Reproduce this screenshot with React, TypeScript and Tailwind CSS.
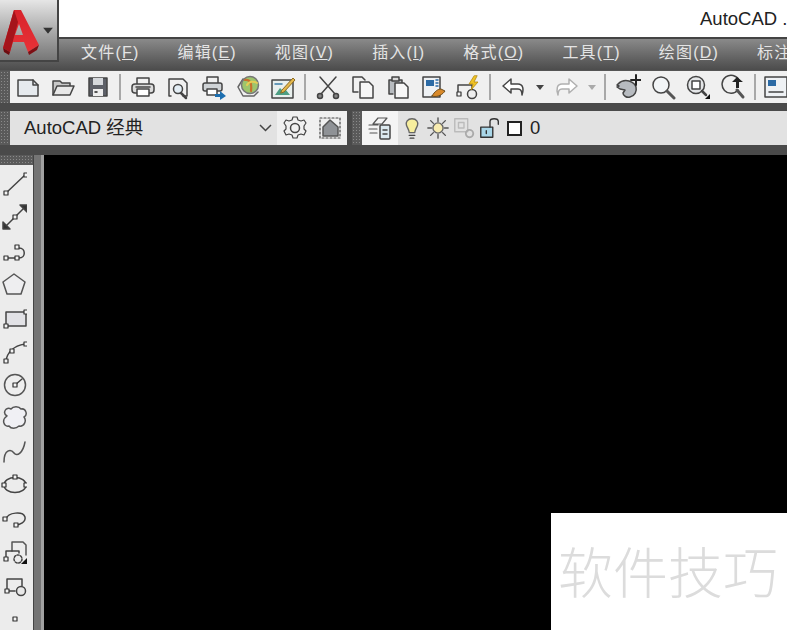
import type { ReactNode } from 'react';

const cjk = { fontFamily: '"Liberation Sans", "Noto Sans CJK SC", sans-serif' };

const menus = [
  ['文件', 'F'],
  ['编辑', 'E'],
  ['视图', 'V'],
  ['插入', 'I'],
  ['格式', 'O'],
  ['工具', 'T'],
  ['绘图', 'D'],
];

function Ico({ children, size = 26 }: { children: ReactNode; size?: number }) {
  return (
    <svg width={size} height={size} viewBox="0 0 26 26" fill="none" stroke="#444" strokeWidth="1.5" strokeLinejoin="round" strokeLinecap="round">
      {children}
    </svg>
  );
}

function Slot({ w = 35, children }: { w?: number; children: ReactNode }) {
  return (
    <div className="flex shrink-0 items-center justify-center" style={{ width: w }}>
      {children}
    </div>
  );
}

function Sep() {
  return (
    <div className="flex w-[10px] shrink-0 justify-center">
      <div className="h-[26px] w-[2px] bg-[#a8a8a8]" />
    </div>
  );
}

function Grip() {
  return <div className="w-[10px] shrink-0 bg-[#5a5a5a] bg-[radial-gradient(#8a8a8a_1px,transparent_1px)] bg-[length:3px_3px]" />;
}

function Caret({ color = '#444' }: { color?: string }) {
  return (
    <svg width="8" height="5" viewBox="0 0 8 5">
      <path d="M0 0h8L4 5z" fill={color} />
    </svg>
  );
}

function Node({ x, y }: { x: number; y: number }) {
  return <rect x={x - 2} y={y - 2} width="4" height="4" fill="#f4f4f4" stroke="#333" strokeWidth="1.2" />;
}

const leftIcons: ReactNode[] = [
  <>
    <path d="M5 22 24 4" />
    <Node x={5} y={22} />
    <Node x={25} y={4} />
  </>,
  <>
    <path d="M5 22 23 4" />
    <path d="M2 18v7h7zM26 8V1h-7z" fill="#333" />
    <Node x={14} y={13} />
  </>,
  <>
    <path d="M6 20h12c7 0 7-10 0-10h-3" />
    <Node x={5} y={20} />
    <Node x={16} y={20} />
    <Node x={16} y={9} />
  </>,
  <path d="M13 3 24 11l-4 12H6L2 11z" fill="#eeeef0" stroke="#555" />,
  <>
    <rect x="5" y="7" width="20" height="14" fill="#e2e2e6" stroke="#444" />
    <Node x={5} y={21} />
    <Node x={25} y={7} />
  </>,
  <>
    <path d="M5 23C6 15 12 8 24 6" />
    <Node x={5} y={23} />
    <Node x={11} y={13} />
    <Node x={25} y={6} />
  </>,
  <>
    <circle cx="14" cy="13" r="10.5" fill="#eee" stroke="#555" />
    <path d="M14 13 21 7" />
    <Node x={14} y={13} />
  </>,
  <path d="M6 11C1 8 5 1 10 4c2-3 8-3 10 0 5-1 7 6 3 8 3 4 0 10-5 9-3 3-8 3-10 0-5 1-8-6-2-10z" fill="#f0f0f4" stroke="#555" />,
  <path d="M3 23C3 10 10 10 13 14s9 0 11-11" stroke="#555" />,
  <>
    <ellipse cx="14" cy="13" rx="11" ry="7.5" />
    <Node x={14} y={5} />
    <Node x={3} y={13} />
    <Node x={25} y={13} />
  </>,
  <>
    <path d="M5 13C7 6 22 5 24 11c1 5-5 8-10 8" />
    <Node x={4} y={13} />
    <Node x={15} y={19} />
  </>,
  <>
    <path d="M11 12V3h11l3 3v10" stroke="#555" />
    <path d="M5 19v-7h13v2" />
    <circle cx="17" cy="20" r="4" strokeDasharray="2 1.5" />
    <Node x={5} y={20} />
    <path d="M26 19v6h-6z" fill="#111" stroke="none" />
  </>,
  <>
    <path d="M6 18V6h15v7" />
    <path d="M7 18h7" />
    <circle cx="20" cy="18" r="4.5" fill="#e8e8e8" />
    <Node x={6} y={18} />
  </>,
  <Node x={14} y={13} />,
];

const tb1a: ReactNode[] = [
  <>
    <path d="M3 6h15l5 5v11H3z" fill="#e6eaee" />
    <path d="M18 6v5h5" />
  </>,
  <>
    <path d="M3 21V7h7l2 2h8v3" fill="#c8c8c8" />
    <path d="M3 21 7 12h17l-4 9z" fill="#e8e8e8" />
  </>,
  <>
    <path d="M4 4h18v18H4z" fill="#5d6068" />
    <path d="M8 4h10v7H8z" fill="#d5d8dc" stroke="none" />
    <path d="M8 15h10v7H8z" fill="#eee" stroke="none" />
    <path d="M10 18h2" stroke="#222" />
  </>,
];

const tb1b: ReactNode[] = [
  <>
    <path d="M7 10V4h12v6" />
    <rect x="2" y="10" width="22" height="9" rx="3" fill="#dcdcdc" />
    <path d="M7 15h12v7H7z" fill="#fff" />
    <path d="M6 13h14" />
  </>,
  <>
    <path d="M6 22H4V5h14l4 4v13h-4" />
    <circle cx="13" cy="15" r="4.5" fill="#e4eef5" />
    <path d="m16 19 5 5" strokeWidth="2.5" />
  </>,
  <>
    <path d="M7 9V3h11v6" />
    <rect x="3" y="9" width="19" height="8" rx="2" fill="#cfd3d6" />
    <path d="M7 15h10v6H7z" fill="#fff" />
    <path d="M15 20h5v-3l6 5-6 4v-3h-5z" fill="#1d6fb0" stroke="none" />
  </>,
  <>
    <path d="M8 5 3 13l5 9h11l4-4" stroke="#666" />
    <circle cx="15" cy="11" r="8.5" fill="#9ec56c" stroke="#777" />
    <path d="M10 6c5-1 7 3 6 11" stroke="#c9702c" strokeWidth="2.2" />
    <path d="M22 9c-3-2-8-2-10 2" stroke="#e5cd55" strokeWidth="2" />
  </>,
  <>
    <rect x="2" y="6" width="21" height="18" fill="#e9f0ee" />
    <path d="M5 21 10 14l4 4 2-2 4 5z" fill="#4d9e83" stroke="none" />
    <path d="M5 10h7" stroke="#3c7da8" />
    <path d="m12 16 11-12 2 2-11 12-3 1z" fill="#e4b84c" stroke="#8c6b22" strokeWidth="1" />
  </>,
];

const tb1c: ReactNode[] = [
  <>
    <path d="m5 3 15 17M21 3 6 20" />
    <circle cx="5" cy="22" r="2.5" fill="#888" />
    <circle cx="21" cy="22" r="2.5" fill="#888" />
  </>,
  <>
    <path d="M8 18H3V3h9l3 3" />
    <path d="M10 8h9l4 4v12H10z" fill="#f7f7f7" />
  </>,
  <>
    <path d="M8 20H4V6h13v3" fill="#b8bcc0" />
    <path d="M7 3h7v4H7z" fill="#d9d9d9" />
    <path d="M10 9h9l4 4v11H10z" fill="#f7f7f7" />
  </>,
  <>
    <rect x="3" y="3" width="17" height="20" fill="#eef1f4" />
    <path d="M6 6h8v6H6z" fill="#2b6aa5" stroke="none" />
    <path d="M16 6h2M16 9h2M16 12h2" stroke="#2b6aa5" />
    <path d="M12 22c3-5 6-7 9-7l4 2c-2 3-7 7-13 5z" fill="#d98a2b" stroke="#6b4b1c" strokeWidth="1" />
  </>,
  <>
    <path d="M3 20v-9h14v3" />
    <circle cx="17" cy="20" r="4.5" fill="#eee" />
    <Node x={4} y={20} />
    <path d="M19 2 14 10h4l-2 6 7-8h-4l3-6z" fill="#f0c325" stroke="#b58a10" strokeWidth="0.8" />
  </>,
];

const tb1d: ReactNode[] = [
  <>
    <path d="M3 10c3-3 7-4 11-3 3 1 6 2 7 6s-1 9-6 10c-3 1-7-1-7-4l2-3-5-1-3-2 2-1-2-1z" fill="#b7bbc0" stroke="#444" />
    <path d="M21 1v10M16 6h10" stroke="#222" strokeWidth="2" />
  </>,
  <>
    <circle cx="11" cy="11" r="8" fill="#f2f5f7" />
    <path d="m17 17 7 7" strokeWidth="3" stroke="#555" />
  </>,
  <>
    <circle cx="11" cy="11" r="8.5" fill="#e4e6e8" />
    <rect x="7" y="7" width="8" height="8" fill="#fff" />
    <path d="m17 17 4 4" strokeWidth="2.5" />
    <path d="M25 20v5h-5z" fill="#111" stroke="none" />
  </>,
  <>
    <path d="M19 6A9 9 0 1 0 18 16" />
    <path d="m17 16 6 7" strokeWidth="3" stroke="#555" />
    <path d="m17 3-5 5h4v6h3V8h4z" fill="#222" stroke="none" />
  </>,
];

export default function App() {
  return (
    <div className="relative h-[630px] w-[787px] overflow-hidden bg-black" style={cjk}>
      {/* title bar */}
      <div className="flex h-[37px] items-center overflow-hidden whitespace-nowrap bg-white pl-[700px] text-[18.5px] text-[#222]">
        AutoCAD .
      </div>

      {/* app button */}
      <div className="absolute left-0 top-0 z-10 flex h-[62px] w-[59px] items-center border-b-2 border-r-2 border-[#444] bg-gradient-to-b from-[#e6e6e6] to-[#777]">
        <svg width="42" height="52" viewBox="0 0 42 52" className="blur-[0.7px]">
          <defs>
            <linearGradient id="logoFace" x1="0" y1="0" x2="0" y2="1">
              <stop offset="0" stopColor="#d8232b" />
              <stop offset="1" stopColor="#e83238" />
            </linearGradient>
          </defs>
          <path d="M14 6 21 6 39 41 28 48 24 38 13 38 10 48 3 44zM19 20 15 31 23 31z" fill="url(#logoFace)" fillRule="evenodd" />
          <path d="M14 6 3 44 10 48 18 18z" fill="#a5141b" />
          <path d="M28 48 39 41 37 46 29 51z" fill="#7e0f14" />
          <path d="M3 44 10 48 9 51 4 48z" fill="#6e0c10" />
        </svg>
        <div className="ml-[2px] scale-125">
          <Caret color="#333" />
        </div>
      </div>

      {/* menu bar */}
      <div className="flex h-[33px] items-center gap-[38px] overflow-hidden whitespace-nowrap border-t-2 border-[#444] bg-gradient-to-b from-[#8a8a8a] to-[#4c4c4c] pb-[4px] pl-[81px] text-[16px] tracking-[1.2px] text-[#e4e4e4]">
        {menus.map(([label, key]) => (
          <span key={label} className="shrink-0">
            {label}(<span className="underline">{key}</span>)
          </span>
        ))}
        <span className="shrink-0">标注</span>
      </div>

      {/* standard toolbar */}
      <div className="flex h-[33px] border-t border-[#555] bg-[#f0f0f0]">
        <Grip />
        <div className="flex items-center overflow-hidden">
          {tb1a.map((icon, i) => (
            <Slot key={i}>
              <Ico>{icon}</Ico>
            </Slot>
          ))}
          <Sep />
          {tb1b.map((icon, i) => (
            <Slot key={i}>
              <Ico>{icon}</Ico>
            </Slot>
          ))}
          <Sep />
          {tb1c.map((icon, i) => (
            <Slot key={i}>
              <Ico>{icon}</Ico>
            </Slot>
          ))}
          <Sep />
          <Slot>
            <Ico>
              <path d="M11 5 3 12l8 7v-4h7c3 0 4 2 4 6 2-6 1-11-4-11h-7z" fill="#fff" />
            </Ico>
          </Slot>
          <Slot w={19}>
            <Caret />
          </Slot>
          <Slot>
            <svg width="26" height="26" viewBox="0 0 26 26" fill="none" stroke="#b0b0b0" strokeWidth="1.5" strokeLinejoin="round">
              <path d="M15 5 23 12l-8 7v-4H8c-3 0-4 2-4 6-2-6-1-11 4-11h7z" fill="#fff" />
            </svg>
          </Slot>
          <Slot w={16}>
            <Caret color="#aaa" />
          </Slot>
          <Sep />
          {tb1d.map((icon, i) => (
            <Slot key={i}>
              <Ico>{icon}</Ico>
            </Slot>
          ))}
          <Sep />
          <Slot w={30}>
            <Ico>
              <rect x="3" y="3" width="22" height="20" fill="#eef1f4" />
              <path d="M6 6h8v6H6z" fill="#2b6aa5" stroke="none" />
              <path d="M7 18h14" />
            </Ico>
          </Slot>
        </div>
      </div>

      {/* workspace and layer toolbar */}
      <div className="box-content flex h-[34px] border-b-[10px] border-t-[8px] border-[#4a4a4a] bg-[#4a4a4a]">
        <Grip />
        <div className="flex w-[267px] shrink-0 items-center justify-between bg-[#e2e2e2] pl-[14px] pr-[5px] text-[18.5px] text-[#222]">
          <span>AutoCAD 经典</span>
          <svg width="13" height="8" viewBox="0 0 13 8" fill="none" stroke="#444" strokeWidth="1.5">
            <path d="m1 1 5.500 5.500L12 1" />
          </svg>
        </div>
        <div className="flex w-[70px] shrink-0 items-center bg-[#f0f0f0]">
          <Slot>
            <Ico>
              <circle cx="13" cy="13" r="4.500" />
              <path d="M11 2h4l1 3 3 1 3-1 2 3-2 3v3l2 2-2 4-3-1-3 1-1 3h-4l-1-3-3-1-3 1-2-4 2-2v-3L2 8l2-3 3 1 3-1z" strokeWidth="1.2" />
            </Ico>
          </Slot>
          <Slot>
            <Ico>
              <rect x="3" y="3" width="20" height="20" strokeDasharray="2 2" strokeWidth="1.200" />
              <path d="M13 5 21 12v9H6v-9z" fill="#8f9296" stroke="#555" />
            </Ico>
          </Slot>
        </div>
        <div className="w-[5px] shrink-0" />
        <Grip />
        <div className="flex w-[36px] shrink-0 items-center justify-center bg-[#f4f4f4]">
          <Ico>
            <path d="M11 3h9l-5 6H6zM2 10h9M2 14h8M3 18h7" stroke="#555" strokeWidth="1.200" />
            <rect x="13" y="10" width="10" height="14" rx="1" fill="#dce9ef" />
            <path d="M16 15h4M16 19h4" />
          </Ico>
        </div>
        <div className="flex min-w-0 flex-1 items-center bg-[#e2e2e2] text-[18.5px] text-[#222]">
          <Slot w={27}>
            <Ico size={24}>
              <path d="M13 3c-5 0-7 4-6 7s3 5 3 8h6c0-3 2-5 3-8s-1-7-6-7z" fill="#f7ee9e" stroke="#666" />
              <path d="M10 21h6M11 24h4" />
            </Ico>
          </Slot>
          <Slot w={25}>
            <Ico size={24}>
              <circle cx="13" cy="13" r="5.500" fill="#f7ebb0" stroke="#666" />
              <path d="M13 2v4M13 20v4M2 13h4M20 13h4M5 5l3 3M18 18l3 3M21 5l-3 3M8 18l-3 3" stroke="#555" />
            </Ico>
          </Slot>
          <Slot w={27}>
            <Ico size={24}>
              <rect x="3" y="3" width="14" height="14" stroke="#bbb" />
              <rect x="7" y="7" width="6" height="6" stroke="#bbb" />
              <circle cx="19" cy="19" r="4" stroke="#aaa" strokeDasharray="2 1" strokeWidth="2" />
            </Ico>
          </Slot>
          <Slot w={25}>
            <Ico size={24}>
              <rect x="3" y="12" width="13" height="11" fill="#a9d6e8" stroke="#333" />
              <path d="M13 12V6c0-4 9-4 9 0v3" stroke="#333" />
              <path d="M9 16v3" stroke="#333" />
            </Ico>
          </Slot>
          <div className="ml-[5px] h-[15px] w-[15px] shrink-0 border-2 border-[#222] bg-white" />
          <span className="ml-[8px]">0</span>
        </div>
      </div>

      {/* body */}
      <div className="flex h-[475px]">
        <div className="flex w-[33px] shrink-0 flex-col bg-[#ececec]">
          <div className="h-[10px] shrink-0 bg-[#5a5a5a] bg-[radial-gradient(#8a8a8a_1px,transparent_1px)] bg-[length:3px_3px]" />
          <div className="flex flex-col items-start pl-[1px] pt-[2px]">
            {leftIcons.map((icon, i) => (
              <div key={i} className="flex h-[33.5px] items-center justify-center">
                <Ico>{icon}</Ico>
              </div>
            ))}
          </div>
        </div>
        <div className="w-[8px] shrink-0 border-l border-[#444] bg-[#747474]" />
        <div className="w-[3px] shrink-0 bg-[#a0a0a0]" />
        <div className="flex-1 bg-black" />
      </div>

      {/* watermark */}
      <div className="absolute bottom-0 right-0 flex h-[117px] w-[236px] items-center bg-white pb-[5px] pl-[7px] text-[55px] leading-none text-[#dcdcdc]" style={{ fontFamily: '"Noto Sans CJK SC", sans-serif', fontWeight: 300 }}>
        软件技巧
      </div>
    </div>
  );
}
